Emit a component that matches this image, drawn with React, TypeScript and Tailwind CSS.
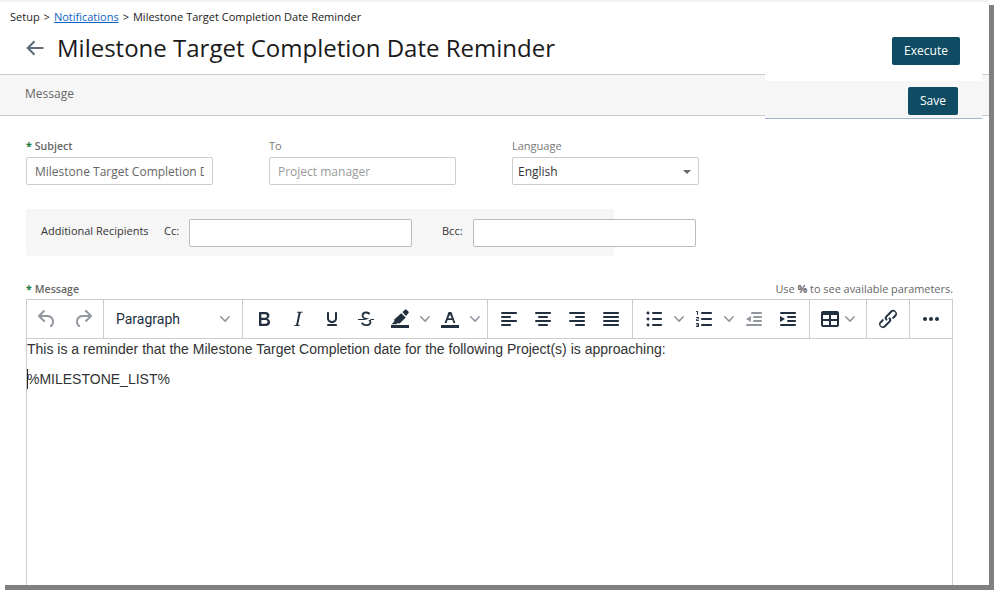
import type { ReactNode } from "react";

const openSans = "font-['Open_Sans',sans-serif]";

function Icon({ d, muted }: { d: string; muted?: boolean }) {
  return (
    <svg viewBox="0 0 24 24" width="24" height="24" className={muted ? "fill-[#222f3e]/50" : "fill-[#222f3e]"}>
      <path d={d} fillRule="evenodd" />
    </svg>
  );
}

function Chevron({ className = "" }: { className?: string }) {
  return (
    <svg viewBox="0 0 10 10" width="10" height="10" className={className}>
      <path d="M8.7 2.2c.3-.3.8-.3 1 0 .4.2.4.7 0 1L5.7 7.8c-.3.3-.9.3-1.2 0L.2 3.2c-.3-.3-.3-.8 0-1 .3-.3.8-.3 1.1 0L5 6l3.7-3.8z" fill="#222f3e" fillOpacity="0.5" />
    </svg>
  );
}

function Tool({ children, w = "w-[34px]" }: { children: ReactNode; w?: string }) {
  return <div className={`flex h-full shrink-0 items-center justify-center ${w}`}>{children}</div>;
}

function Caret() {
  return (
    <Tool w="w-4">
      <Chevron />
    </Tool>
  );
}

function Group({ children, className }: { children: ReactNode; className: string }) {
  return <div className={`flex h-full shrink-0 items-center border-r border-[#ccc] ${className}`}>{children}</div>;
}

const paths = {
  undo: "M6.4 8H12c3.7 0 6.2 2 6.8 5.1.6 2.7-.4 5.6-2.3 6.8a1 1 0 0 1-1-1.8c1.1-.6 1.8-2.7 1.4-4.6-.5-2.1-2.1-3.5-4.9-3.5H6.4l3.3 3.3a1 1 0 1 1-1.4 1.4l-5-5a1 1 0 0 1 0-1.4l5-5a1 1 0 0 1 1.4 1.4L6.4 8z",
  redo: "M17.6 10H12c-2.8 0-4.4 1.4-4.9 3.5-.4 2 .3 4 1.4 4.6a1 1 0 1 1-1 1.8c-2-1.2-2.9-4.1-2.3-6.8.6-3 3-5.1 6.8-5.1h5.6l-3.3-3.3a1 1 0 1 1 1.4-1.4l5 5a1 1 0 0 1 0 1.4l-5 5a1 1 0 0 1-1.4-1.4l3.3-3.3z",
  bold: "M7.8 19c-.3 0-.5 0-.6-.2l-.2-.5V5.7c0-.2 0-.4.2-.5l.6-.2h5c1.5 0 2.7.3 3.5 1 .7.6 1.1 1.4 1.1 2.5a3 3 0 0 1-.6 1.9c-.4.6-1 1-1.6 1.2.4.1.9.3 1.3.6s.8.7 1 1.2c.4.4.5 1 .5 1.6 0 1.3-.4 2.3-1.3 3-.8.7-2.1 1-3.8 1H7.8zm5-8.3c.6 0 1.2-.1 1.6-.5.4-.3.6-.7.6-1.3 0-1.1-.8-1.7-2.3-1.7H9.3v3.5h3.4zm.5 6c.7 0 1.3-.1 1.7-.4.4-.4.6-.9.6-1.5s-.2-1-.7-1.4c-.4-.3-1-.4-2-.4H9.4v3.8h4z",
  italic: "M16.7 4.7l-.1.9h-.3c-.6 0-1 0-1.4.3-.3.3-.4.6-.5 1.1l-2.1 9.8v.6c0 .5.4.8 1.4.8h.2l-.2.8H8l.2-.8h.2c1.1 0 1.8-.5 2-1.5l2-9.8.1-.5c0-.6-.4-.8-1.4-.8h-.3l.2-.9h5.8z",
  underline: "M16 5c.6 0 1 .4 1 1v5.5a4 4 0 0 1-.4 1.8l-1 1.4a5.3 5.3 0 0 1-5.5 1 5 5 0 0 1-1.6-1c-.5-.4-.8-.9-1.1-1.4a4 4 0 0 1-.4-1.8V6c0-.6.4-1 1-1s1 .4 1 1v5.5c0 .3 0 .6.2 1l.6.7a3.3 3.3 0 0 0 2.2.8 3.4 3.4 0 0 0 2.2-.8c.3-.2.4-.5.6-.8l.2-.9V6c0-.6.4-1 1-1zM8 17h8c.6 0 1 .4 1 1s-.4 1-1 1H8a1 1 0 0 1 0-2z",
  strike: "M15.6 8.5c-.5-.7-1-1.1-1.3-1.3-.6-.4-1.3-.6-2-.6-2.7 0-2.8 1.7-2.8 2.1 0 1.6 1.8 2 3.2 2.3 4.4.9 4.6 2.8 4.6 3.9 0 1.4-.7 4.1-5 4.1A6.2 6.2 0 0 1 7 16.4l1.5-1.1c.4.6 1.6 2 3.7 2 1.6 0 2.5-.4 3-1 .3-.4.3-.9.3-1.3 0-1.7-1.6-2-3.3-2.4-1.6-.4-4.5-1-4.5-4 0-1.5.7-4 4.6-4 2.3 0 3.6 1.2 4 1.7l-1.2 1.2zM4 12h16v1H4z",
  highlight: "M3 18h18v3H3zM13.2 6.2l4.6 4.4-5.9 5.6c-.4.3-.9.4-1.3.2l-.8-.3-1.6 1.1H3.6l2.9-3-.3-.7c-.2-.5 0-1 .3-1.3l6.7-6zM14.4 5.1l2.9-2.5c.3-.3.8-.3 1.1 0l2.2 2.2c.3.3.3.8 0 1.1l-2.7 3.2-3.5-4z",
  textColor: "M3 18h18v3H3zM11 5h2c.3 0 .5.2.6.4L17.4 16h-2l-1-3H9.6l-1 3h-2l3.8-10.6c.1-.2.3-.4.6-.4zm1 2.6L10.2 11.3h3.6L12 7.6z",
  alignLeft: "M5 5h14c.6 0 1 .4 1 1s-.4 1-1 1H5a1 1 0 1 1 0-2zm0 4h8c.6 0 1 .4 1 1s-.4 1-1 1H5a1 1 0 1 1 0-2zm0 8h8c.6 0 1 .4 1 1s-.4 1-1 1H5a1 1 0 0 1 0-2zm0-4h14c.6 0 1 .4 1 1s-.4 1-1 1H5a1 1 0 0 1 0-2z",
  alignCenter: "M5 5h14c.6 0 1 .4 1 1s-.4 1-1 1H5a1 1 0 1 1 0-2zm3 4h8c.6 0 1 .4 1 1s-.4 1-1 1H8a1 1 0 1 1 0-2zm0 8h8c.6 0 1 .4 1 1s-.4 1-1 1H8a1 1 0 0 1 0-2zm-3-4h14c.6 0 1 .4 1 1s-.4 1-1 1H5a1 1 0 0 1 0-2z",
  alignRight: "M5 5h14c.6 0 1 .4 1 1s-.4 1-1 1H5a1 1 0 1 1 0-2zm6 4h8c.6 0 1 .4 1 1s-.4 1-1 1h-8a1 1 0 0 1 0-2zm0 8h8c.6 0 1 .4 1 1s-.4 1-1 1h-8a1 1 0 0 1 0-2zm-6-4h14c.6 0 1 .4 1 1s-.4 1-1 1H5a1 1 0 0 1 0-2z",
  justify: "M5 5h14c.6 0 1 .4 1 1s-.4 1-1 1H5a1 1 0 1 1 0-2zm0 4h14c.6 0 1 .4 1 1s-.4 1-1 1H5a1 1 0 1 1 0-2zm0 4h14c.6 0 1 .4 1 1s-.4 1-1 1H5a1 1 0 0 1 0-2zm0 4h14c.6 0 1 .4 1 1s-.4 1-1 1H5a1 1 0 0 1 0-2z",
  bullet: "M11 5h8c.6 0 1 .4 1 1s-.4 1-1 1h-8a1 1 0 0 1 0-2zm0 6h8c.6 0 1 .4 1 1s-.4 1-1 1h-8a1 1 0 0 1 0-2zm0 6h8c.6 0 1 .4 1 1s-.4 1-1 1h-8a1 1 0 0 1 0-2zM4.5 6c0-.4.1-.8.4-1 .3-.4.7-.5 1.1-.5s.8.1 1 .4c.4.3.5.7.5 1.1s-.1.8-.4 1c-.3.4-.7.5-1.1.5s-.8-.1-1-.4c-.4-.3-.5-.7-.5-1.1zm0 6c0-.4.1-.8.4-1 .3-.4.7-.5 1.1-.5s.8.1 1 .4c.4.3.5.7.5 1.1s-.1.8-.4 1c-.3.4-.7.5-1.1.5s-.8-.1-1-.4c-.4-.3-.5-.7-.5-1.1zm0 6c0-.4.1-.8.4-1 .3-.4.7-.5 1.1-.5s.8.1 1 .4c.4.3.5.7.5 1.1s-.1.8-.4 1c-.3.4-.7.5-1.1.5s-.8-.1-1-.4c-.4-.3-.5-.7-.5-1.1z",
  number: "M10 17h9c.6 0 1 .4 1 1s-.4 1-1 1h-9a1 1 0 0 1 0-2zm0-6h9c.6 0 1 .4 1 1s-.4 1-1 1h-9a1 1 0 0 1 0-2zm0-6h9c.6 0 1 .4 1 1s-.4 1-1 1h-9a1 1 0 1 1 0-2zM6 4v3.5c0 .3-.2.5-.5.5a.5.5 0 0 1-.5-.5V5h-.5a.5.5 0 0 1 0-1H6zm-1 8.8l.2.2h1.3c.3 0 .5.2.5.5s-.2.5-.5.5H4.9a1 1 0 0 1-.9-1V13c0-.4.3-.8.6-1l1.2-.4.2-.3a.2.2 0 0 0-.2-.2H4.5a.5.5 0 0 1-.5-.5c0-.3.2-.5.5-.5h1.6c.5 0 .9.4.9 1v.1c0 .4-.3.8-.6 1l-1.2.4-.2.3zM7 17v2c0 .6-.4 1-1 1H4.5a.5.5 0 0 1 0-1h1.2c.2 0 .3-.1.3-.3 0-.2-.1-.3-.3-.3H4.4a.4.4 0 1 1 0-.8h1.3c.2 0 .3-.1.3-.3 0-.2-.1-.3-.3-.3H4.5a.5.5 0 1 1 0-1H6c.6 0 1 .4 1 1z",
  outdent: "M10 5h9c.6 0 1 .4 1 1s-.4 1-1 1h-9a1 1 0 1 1 0-2zm2 4h7c.6 0 1 .4 1 1s-.4 1-1 1h-7a1 1 0 0 1 0-2zm0 4h7c.6 0 1 .4 1 1s-.4 1-1 1h-7a1 1 0 0 1 0-2zm-7 4h14a1 1 0 0 1 0 2H5a1 1 0 0 1 0-2zM4 12l5-3v6l-5-3z",
  indent: "M5 5h14c.6 0 1 .4 1 1s-.4 1-1 1H5a1 1 0 1 1 0-2zm7 4h7c.6 0 1 .4 1 1s-.4 1-1 1h-7a1 1 0 0 1 0-2zm0 4h7c.6 0 1 .4 1 1s-.4 1-1 1h-7a1 1 0 0 1 0-2zm-7 4h14a1 1 0 0 1 0 2H5a1 1 0 0 1 0-2zM4 9l5 3-5 3V9z",
  table: "M19 4a2 2 0 0 1 2 2v12a2 2 0 0 1-2 2H5a2 2 0 0 1-2-2V6c0-1.1.9-2 2-2h14zM5 14v4h6v-4H5zm14 0h-6v4h6v-4zm0-6h-6v4h6V8zm-8 0H5v4h6V8z",
  link: "M6.2 12.3a1 1 0 0 1 1.4 1.4l-2 2a2 2 0 1 0 2.6 2.8l4.8-4.8a1 1 0 0 0 0-1.4 1 1 0 1 1 1.4-1.3 2.9 2.9 0 0 1 0 4L9.6 20a3.9 3.9 0 0 1-5.5-5.5l2-2zm11.6-.6a1 1 0 0 1-1.4-1.4l2-2a2 2 0 1 0-2.6-2.8L11 10.3a1 1 0 0 0 0 1.4A1 1 0 1 1 9.6 13a2.9 2.9 0 0 1 0-4L14.4 4a3.9 3.9 0 0 1 5.5 5.5l-2 2z",
  more: "M6 10a2 2 0 0 0-2 2c0 1.1.9 2 2 2a2 2 0 0 0 2-2 2 2 0 0 0-2-2zm12 0a2 2 0 0 0-2 2c0 1.1.9 2 2 2a2 2 0 0 0 2-2 2 2 0 0 0-2-2zm-6 0a2 2 0 0 0-2 2c0 1.1.9 2 2 2a2 2 0 0 0 2-2 2 2 0 0 0-2-2z",
};

function EditorToolbar() {
  return (
    <div className="flex h-[39px] items-center border-b border-[#ccc]">
      <Group className="w-[77px] gap-[2px] pl-[3px]">
        <Tool><Icon d={paths.undo} muted /></Tool>
        <Tool><Icon d={paths.redo} muted /></Tool>
      </Group>
      <Group className="w-[139px] justify-between pl-3 pr-3">
        <span className="font-['Roboto',sans-serif] text-sm text-[#222f3e]">Paragraph</span>
        <Chevron />
      </Group>
      <Group className="w-[245px] pl-1">
        <Tool><Icon d={paths.bold} /></Tool>
        <Tool><Icon d={paths.italic} /></Tool>
        <Tool><Icon d={paths.underline} /></Tool>
        <Tool><Icon d={paths.strike} /></Tool>
        <Tool><Icon d={paths.highlight} /></Tool>
        <Caret />
        <Tool><Icon d={paths.textColor} /></Tool>
        <Caret />
      </Group>
      <Group className="w-[145px] pl-1">
        <Tool><Icon d={paths.alignLeft} /></Tool>
        <Tool><Icon d={paths.alignCenter} /></Tool>
        <Tool><Icon d={paths.alignRight} /></Tool>
        <Tool><Icon d={paths.justify} /></Tool>
      </Group>
      <Group className="w-[177px] pl-1">
        <Tool><Icon d={paths.bullet} /></Tool>
        <Caret />
        <Tool><Icon d={paths.number} /></Tool>
        <Caret />
        <Tool><Icon d={paths.outdent} muted /></Tool>
        <Tool><Icon d={paths.indent} /></Tool>
      </Group>
      <Group className="w-[57px] gap-[3px] pl-2">
        <Icon d={paths.table} />
        <Chevron />
      </Group>
      <Group className="w-[43px] justify-center">
        <Icon d={paths.link} />
      </Group>
      <div className="flex h-full flex-1 items-center justify-center">
        <Icon d={paths.more} />
      </div>
    </div>
  );
}

function ActionButton({ label, className }: { label: string; className: string }) {
  return (
    <button className={`h-7 rounded-[2px] bg-[#0f4c63] text-[12px] text-white ${className}`}>{label}</button>
  );
}

function FieldLabel({ children, required }: { children: ReactNode; required?: boolean }) {
  return (
    <div className={`h-[21px] leading-[20px] ${required ? "text-[10.6px] font-semibold text-[#666]" : "text-[11px] text-[#777]"}`}>
      {required && <span className="mr-[3px] font-bold text-[#1a7a3c]">*</span>}
      {children}
    </div>
  );
}

export default function App() {
  return (
    <div className="h-[590px] w-[994px] bg-white">
      <div className={`relative h-[585px] w-[989px] overflow-hidden bg-white shadow-[5px_5px_0_#808080] ${openSans}`}>
        <div className="h-[2px] bg-[#f3f3f3]" />
        <header className="h-[73px] border-b border-[#ccc] pl-[10px]">
          <nav className="flex h-[29px] items-center gap-[4px] pt-[2px] text-[11px] text-[#222]">
            <span>Setup</span>
            <span>&gt;</span>
            <a className="text-[#0b62c4] underline">Notifications</a>
            <span>&gt;</span>
            <span>Milestone Target Completion Date Reminder</span>
          </nav>
          <div className="flex items-center gap-[13px] pl-[16px]">
            <svg viewBox="0 0 18 16" width="18" height="16" fill="none" stroke="#5c6a7c" strokeWidth="2">
              <path d="M17.5 8H2M8.5 1.2 1.8 8l6.7 6.8" />
            </svg>
            <h1 className="text-[24px] leading-[34px] text-[#1a1a1a]">Milestone Target Completion Date Reminder</h1>
          </div>
        </header>

        <div className="flex h-[41px] items-start border-b border-[#ccc] bg-[#f6f6f6] pl-[25px] pt-[10px] text-[12px] text-[#666]">
          Message
        </div>

        {/* floating action bar sits over the header and tab strip */}
        <div className="absolute left-[765px] top-[2px] w-[217px]">
          <div className="flex h-[79px] justify-end bg-white pr-[22px] pt-[35px]">
            <ActionButton label="Execute" className="w-[68px]" />
          </div>
          <div className="flex h-[38px] justify-end border-b border-[#9fb3d4] bg-[#f6f6f6] pr-[24px] pt-[6px]">
            <ActionButton label="Save" className="w-[50px]" />
          </div>
        </div>

        <div className="pl-[26px] pt-[20px]">
          <div className="flex gap-[56px]">
            <div className="w-[187px]">
              <FieldLabel required>Subject</FieldLabel>
              <input
                readOnly
                value="Milestone Target Completion Date Reminder"
                className="h-[28px] w-full rounded-[2px] border border-[#ccc] px-2 text-[12px] text-[#666] outline-none"
              />
            </div>
            <div className="w-[187px]">
              <FieldLabel>To</FieldLabel>
              <input
                readOnly
                placeholder="Project manager"
                className="h-[28px] w-full rounded-[2px] border border-[#ccc] px-2 text-[12px] outline-none placeholder:text-[#999]"
              />
            </div>
            <div className="w-[187px]">
              <FieldLabel>Language</FieldLabel>
              <div className="flex h-[28px] items-center justify-between rounded-[2px] border border-[#ccc] pl-[5px] pr-[6px] pt-px text-[12px] text-[#333]">
                English
                <span className="mr-[1px] h-0 w-0 border-x-[4px] border-t-[4px] border-x-transparent border-t-[#666]" />
              </div>
            </div>
          </div>

          <div className="mt-[24px] flex h-[47px] w-[588px] items-center rounded-[2px] bg-[#f6f6f6] pl-[15px] text-[11px] whitespace-nowrap text-[#333]">
            <span className="mb-[2px] w-[107px] shrink-0">Additional Recipients</span>
            <span className="mb-[2px] ml-[16px] w-[15px] shrink-0">Cc:</span>
            <div className="ml-[10px] h-[28px] w-[223px] shrink-0 rounded-[2px] border border-[#bbb] bg-white" />
            <span className="mb-[2px] ml-[30px] w-[21px] shrink-0">Bcc:</span>
            <div className="ml-[10px] h-[28px] w-[223px] shrink-0 rounded-[2px] border border-[#bbb] bg-white" />
          </div>

          <div className="mt-[23px] flex h-[20px] w-[927px] items-center justify-between">
            <div className="h-[20px]">
              <FieldLabel required>Message</FieldLabel>
            </div>
            <span className="text-[10.9px] text-[#666]">
              Use <b>%</b> to see available parameters.
            </span>
          </div>

          <div className="h-[300px] w-[927px] border border-[#ccc]">
            <EditorToolbar />
            <div className="font-['Liberation_Sans',Arial,sans-serif] text-[14px] leading-[21px] text-[#333]">
              <p className="mb-[9px]">This is a reminder that the Milestone Target Completion date for the following Project(s) is approaching:</p>
              <p className="relative">
                <span className="absolute left-0 top-0 h-[20px] w-px bg-[#222]" />
                %MILESTONE_LIST%
              </p>
            </div>
          </div>
        </div>
      </div>
    </div>
  );
}
